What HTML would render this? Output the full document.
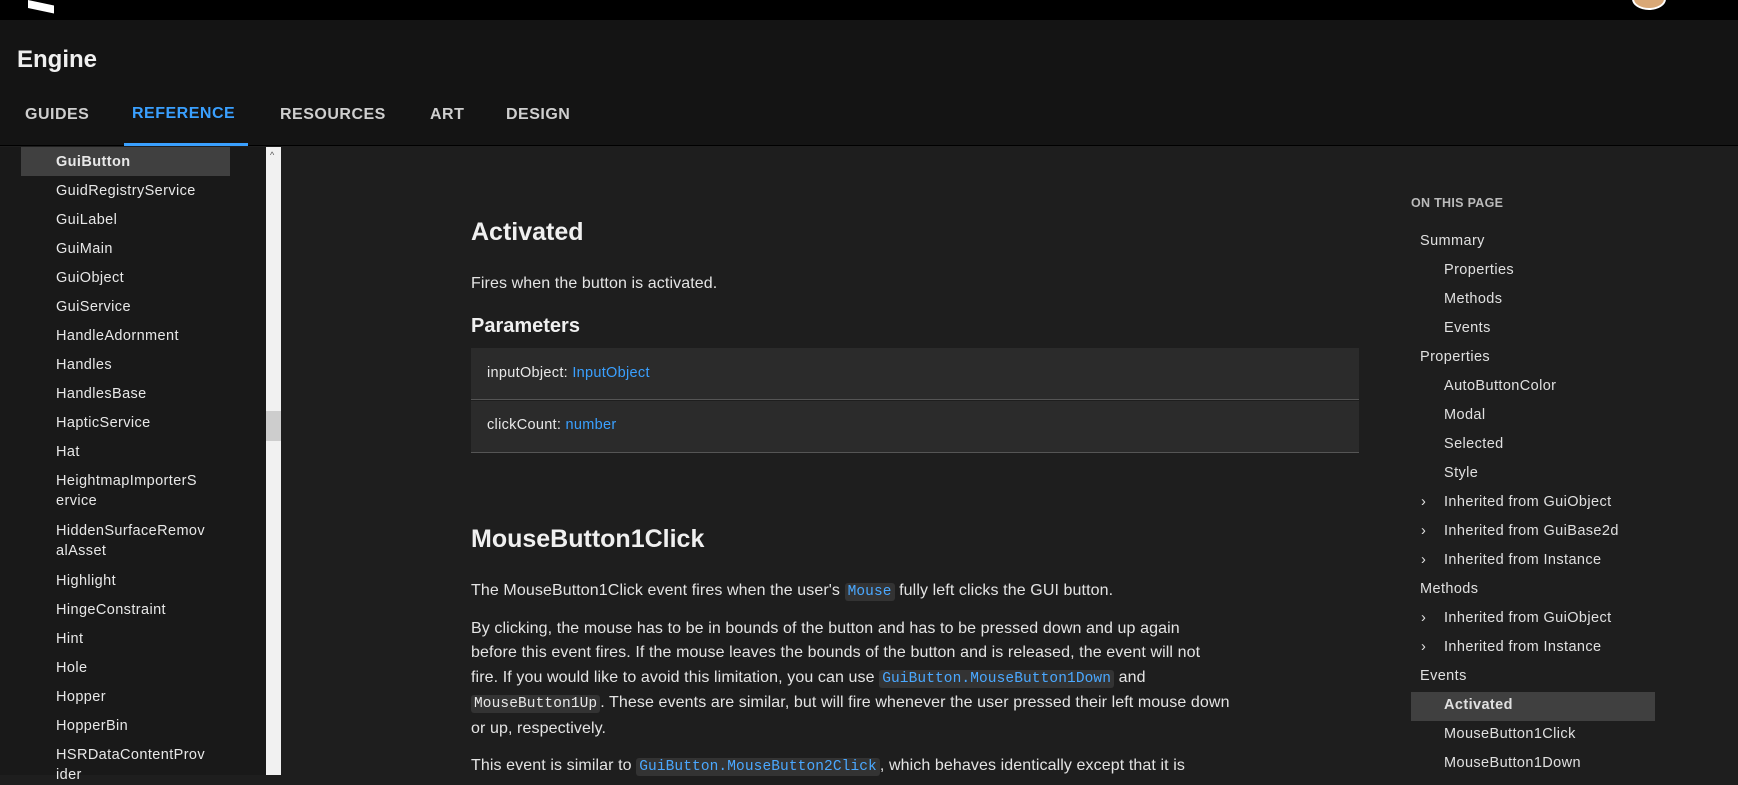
<!DOCTYPE html>
<html><head><meta charset="utf-8"><style>
*{margin:0;padding:0;box-sizing:border-box}
body{width:1738px;height:775px;overflow:hidden;background:#1e1e1e;font-family:"Liberation Sans",sans-serif;color:#e8e8e8;position:relative}
.a{position:absolute;white-space:nowrap}
#top{position:absolute;left:0;top:0;width:1738px;height:20px;background:#000}
#hdr{position:absolute;left:0;top:20px;width:1738px;height:126px;background:#141414;border-bottom:1px solid #000}
.nav{font-size:16px;font-weight:bold;color:#cfcfcf;top:106px;letter-spacing:0.5px}
#side{position:absolute;left:0;top:147px;width:266px;height:628px;background:#191919}
#sb{position:absolute;left:266px;top:147px;width:15px;height:628px;background:#f1f1f1}
.si{position:absolute;left:56px;font-size:14.5px;color:#e8e8e8;line-height:20px;letter-spacing:0.4px}
p.t{position:absolute;left:471px;font-size:16px;line-height:24.4px;color:#e4e4e4;white-space:nowrap;letter-spacing:0.1px}
code{font-family:"Liberation Mono",monospace;font-size:14.5px;background:#333;border-radius:3px;padding:1px 3px;color:#4aa8ff}
code.w{color:#e8e8e8}
.r{position:absolute;font-size:14.5px;color:#e0e0e0;white-space:nowrap;letter-spacing:0.4px}
</style></head><body>
<div id="top"></div>
<div class="a" style="left:28px;top:0;width:26px;height:8px;background:#fff;transform:skewY(12deg);transform-origin:0 0"></div>
<div class="a" style="left:1632px;top:-12px;width:34px;height:22px;border-radius:50%;background:#d9a877;border:2px solid #fff"></div>
<div id="hdr"></div>
<div class="a" style="left:17px;top:46px;font-size:24px;font-weight:bold;color:#f0f0f0">Engine</div>
<div class="a nav" style="left:25px">GUIDES</div>
<div class="a nav" style="left:132px;top:105px;color:#3aa0ff">REFERENCE</div>
<div class="a" style="left:124px;top:143px;width:124px;height:3px;background:#3aa0ff"></div>
<div class="a nav" style="left:280px">RESOURCES</div>
<div class="a nav" style="left:430px">ART</div>
<div class="a nav" style="left:506px">DESIGN</div>
<div id="side"></div>
<div class="a" style="left:21px;top:147px;width:209px;height:29px;background:#404040"></div>
<div class="si" style="top:152px;font-weight:bold">GuiButton</div>
<div class="si" style="top:181px">GuidRegistryService</div>
<div class="si" style="top:210px">GuiLabel</div>
<div class="si" style="top:239px">GuiMain</div>
<div class="si" style="top:268px">GuiObject</div>
<div class="si" style="top:297px">GuiService</div>
<div class="si" style="top:326px">HandleAdornment</div>
<div class="si" style="top:355px">Handles</div>
<div class="si" style="top:384px">HandlesBase</div>
<div class="si" style="top:413px">HapticService</div>
<div class="si" style="top:442px">Hat</div>
<div class="si" style="top:471px">HeightmapImporterS<br>ervice</div>
<div class="si" style="top:521px">HiddenSurfaceRemov<br>alAsset</div>
<div class="si" style="top:571px">Highlight</div>
<div class="si" style="top:600px">HingeConstraint</div>
<div class="si" style="top:629px">Hint</div>
<div class="si" style="top:658px">Hole</div>
<div class="si" style="top:687px">Hopper</div>
<div class="si" style="top:716px">HopperBin</div>
<div class="si" style="top:745px">HSRDataContentProv<br>ider</div>
<div id="sb"></div>
<div class="a" style="left:266px;top:411px;width:15px;height:30px;background:#cdcdcd"></div>
<div class="a" style="left:270px;top:150px;font-size:9px;color:#555">^</div>

<div class="a" style="left:471px;top:218px;font-size:25px;font-weight:bold;color:#f0f0f0">Activated</div>
<p class="t" style="top:272px">Fires when the button is activated.</p>
<div class="a" style="left:471px;top:315px;font-size:20px;font-weight:bold;color:#f0f0f0">Parameters</div>
<div class="a" style="left:471px;top:348px;width:888px;height:52px;background:#2b2b2b;border-bottom:1px solid #555"></div>
<div class="a" style="left:471px;top:401px;width:888px;height:52px;background:#2b2b2b;border-bottom:1px solid #555"></div>
<div class="a" style="left:487px;top:365px;font-size:14.5px;letter-spacing:0.3px">inputObject: <span style="color:#3aa0ff">InputObject</span></div>
<div class="a" style="left:487px;top:417px;font-size:14.5px;letter-spacing:0.3px">clickCount: <span style="color:#3aa0ff">number</span></div>
<div class="a" style="left:471px;top:525px;font-size:25px;font-weight:bold;color:#f0f0f0">MouseButton1Click</div>
<p class="t" style="top:579px">The MouseButton1Click event fires when the user's <code>Mouse</code> fully left clicks the GUI button.</p>
<p class="t" style="top:617px">By clicking, the mouse has to be in bounds of the button and has to be pressed down and up again<br>before this event fires. If the mouse leaves the bounds of the button and is released, the event will not<br>fire. If you would like to avoid this limitation, you can use <code>GuiButton.MouseButton1Down</code> and<br><code class="w">MouseButton1Up</code>. These events are similar, but will fire whenever the user pressed their left mouse down<br>or up, respectively.</p>
<p class="t" style="top:754px">This event is similar to <code>GuiButton.MouseButton2Click</code>, which behaves identically except that it is</p>

<div class="a" style="left:1411px;top:196px;font-size:12.5px;font-weight:bold;color:#bbb;letter-spacing:0.3px">ON THIS PAGE</div>
<div class="a" style="left:1411px;top:692px;width:244px;height:29px;background:#404040"></div>
<div class="r" style="left:1420px;top:233px">Summary</div>
<div class="r" style="left:1444px;top:262px">Properties</div>
<div class="r" style="left:1444px;top:291px">Methods</div>
<div class="r" style="left:1444px;top:320px">Events</div>
<div class="r" style="left:1420px;top:349px">Properties</div>
<div class="r" style="left:1444px;top:378px">AutoButtonColor</div>
<div class="r" style="left:1444px;top:407px">Modal</div>
<div class="r" style="left:1444px;top:436px">Selected</div>
<div class="r" style="left:1444px;top:465px">Style</div>
<div class="r" style="left:1421px;top:494px">›</div><div class="r" style="left:1444px;top:494px">Inherited from GuiObject</div>
<div class="r" style="left:1421px;top:523px">›</div><div class="r" style="left:1444px;top:523px">Inherited from GuiBase2d</div>
<div class="r" style="left:1421px;top:552px">›</div><div class="r" style="left:1444px;top:552px">Inherited from Instance</div>
<div class="r" style="left:1420px;top:581px">Methods</div>
<div class="r" style="left:1421px;top:610px">›</div><div class="r" style="left:1444px;top:610px">Inherited from GuiObject</div>
<div class="r" style="left:1421px;top:639px">›</div><div class="r" style="left:1444px;top:639px">Inherited from Instance</div>
<div class="r" style="left:1420px;top:668px">Events</div>
<div class="r" style="left:1444px;top:697px;font-weight:bold">Activated</div>
<div class="r" style="left:1444px;top:726px">MouseButton1Click</div>
<div class="r" style="left:1444px;top:755px">MouseButton1Down</div>
</body></html>
